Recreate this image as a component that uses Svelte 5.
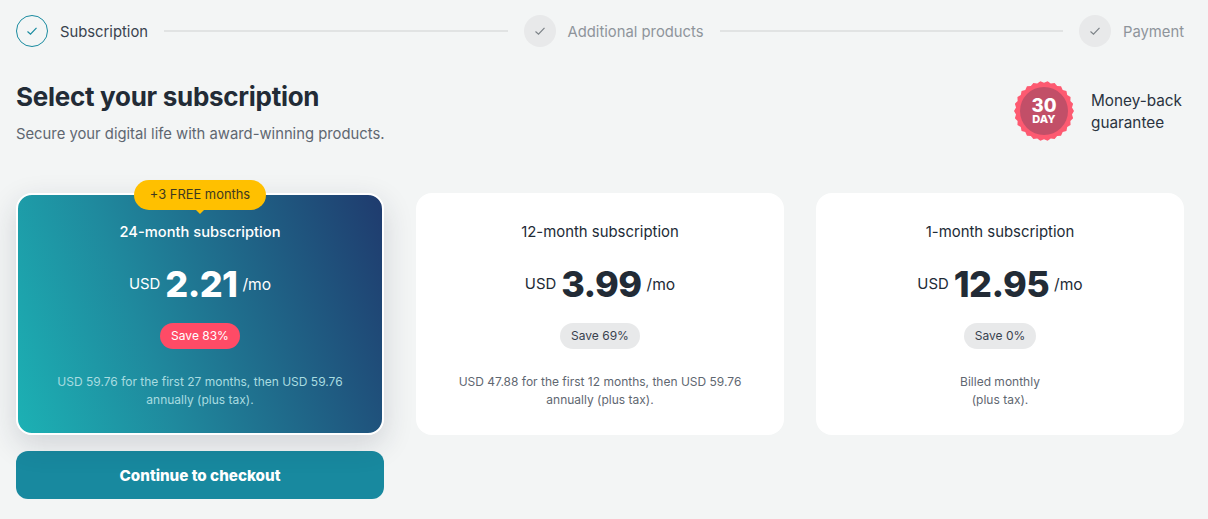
<script>
  const steps = [
    { label: 'Subscription', active: true },
    { label: 'Additional products', active: false },
    { label: 'Payment', active: false }
  ];

  const plans = [
    { name: '24-month subscription', price: '2.21', save: 'Save 83%', note: ['USD 59.76 for the first 27 months, then USD 59.76', 'annually (plus tax).'], selected: true },
    { name: '12-month subscription', price: '3.99', save: 'Save 69%', note: ['USD 47.88 for the first 12 months, then USD 59.76', 'annually (plus tax).'], selected: false },
    { name: '1-month subscription', price: '12.95', save: 'Save 0%', note: ['Billed monthly', '(plus tax).'], selected: false }
  ];

  // scalloped edge of the badge
  const teeth = 26;
  let scallop = '';
  for (let i = 0; i < teeth * 2; i++) {
    const a = (i / (teeth * 2)) * Math.PI * 2;
    const r = i % 2 ? 28.2 : 30;
    scallop += `${(30 + r * Math.cos(a)).toFixed(2)},${(30 + r * Math.sin(a)).toFixed(2)} `;
  }
</script>

<div class="page">
  <nav class="stepper">
    {#each steps as step, i}
      {#if i > 0}<div class="line"></div>{/if}
      <div class="step" class:active={step.active}>
        <span class="dot">
          <svg width="12" height="12" viewBox="0 0 12 12" fill="none"><path d="M1.5 6.5 4.5 9.2 10.5 2.8" stroke="currentColor" stroke-width="1.2"/></svg>
        </span>
        <span class="label">{step.label}</span>
      </div>
    {/each}
  </nav>

  <header class="head">
    <div>
      <h1>Select your subscription</h1>
      <p>Secure your digital life with award-winning products.</p>
    </div>
    <div class="guarantee">
      <div class="badge">
        <svg width="60" height="60" viewBox="0 0 60 60">
          <polygon points={scallop} fill="#fd5a71"/>
          <circle cx="30" cy="30" r="24" fill="#c24f68"/>
        </svg>
        <div class="badge-text"><b>30</b><span>DAY</span></div>
      </div>
      <div class="guarantee-text">Money-back<br />guarantee</div>
    </div>
  </header>

  <section class="plans">
    {#each plans as plan}
      <div class="col">
        <div class="card" class:selected={plan.selected}>
          {#if plan.selected}<div class="ribbon">+3 FREE months</div>{/if}
          <div class="name">{plan.name}</div>
          <div class="price">
            <span class="cur">USD</span>
            <span class="amount">{plan.price}</span>
            <span class="per">/mo</span>
          </div>
          <div class="save">{plan.save}</div>
          <div class="note">{plan.note[0]}<br />{plan.note[1]}</div>
        </div>
        {#if plan.selected}<button class="cta">Continue to checkout</button>{/if}
      </div>
    {/each}
  </section>
</div>

<style>
  :global(body) {
    margin: 0;
    background: #f3f5f5;
    color: #222b36;
    font-family: Inter, "Liberation Sans", sans-serif;
  }

  .page { padding: 15px 24px 20px 16px; height: 519px; box-sizing: border-box; overflow: hidden; }

  .stepper { display: flex; align-items: center; gap: 16px; height: 32px; }
  .line { flex: 1; height: 2px; background: #e1e3e3; }
  .step { display: flex; align-items: center; gap: 12px; color: #8e949b; font-size: 14.8px; }
  .step.active { color: #38424e; }
  .label { padding-top: 2px; }
  .dot {
    width: 32px; height: 32px; border-radius: 50%; background: #e8e9ea; color: #7d8388;
    display: flex; align-items: center; justify-content: center; box-sizing: border-box;
  }
  .active .dot { background: none; border: 1px solid #198ba0; color: #198ba0; }

  .head { display: flex; justify-content: space-between; margin-top: 20px; height: 126px; }
  h1 { margin: 14px 0 0; font-size: 26px; line-height: 32px; font-weight: 700; letter-spacing: -0.28px; }
  .head p { margin: 11px 0 0; font-size: 14.8px; line-height: 20px; color: #5f6771; }

  .guarantee { display: flex; align-items: flex-start; gap: 17px; margin-top: 14px; width: 170px; }
  .badge { position: relative; width: 60px; height: 60px; }
  .badge-text {
    position: absolute; inset: 0; padding-top: 17px; display: flex; flex-direction: column; align-items: center;
    color: #fff; font-weight: 800;
  }
  .badge-text b { font-size: 18.5px; line-height: 15px; font-weight: 800; }
  .badge-text span { font-size: 11px; line-height: 12px; }
  .guarantee-text { font-size: 15.3px; line-height: 22px; margin-top: 9px; color: #2a3340; white-space: nowrap; }

  .plans { display: grid; grid-template-columns: repeat(3, 368px); gap: 32px; }
  .card {
    position: relative; height: 242px; box-sizing: border-box; background: #fff; border-radius: 16px;
    padding-top: 29px; text-align: center;
  }
  .card.selected {
    color: #fff; border: 2px solid #fff; padding-top: 27px;
    background: linear-gradient(70deg, #1cb1b4 0%, #1f8a9e 35%, #1f3b6e 100%);
    box-shadow: 0 10px 30px rgba(30, 40, 60, 0.16);
  }
  .ribbon {
    position: absolute; top: -15px; left: 50%; transform: translateX(-50%); width: 132px; height: 30px;
    background: #ffc000; border-radius: 15px; color: #3e3a20; font-size: 12.9px; line-height: 30px;
  }
  .ribbon::after {
    content: ''; position: absolute; left: 61px; bottom: -4px; border: 5px solid transparent;
    border-top-color: #ffc000; border-bottom: 0;
  }
  .name { font-size: 14.9px; line-height: 20px; font-weight: 400; }
  .selected .name { font-size: 14.7px; font-weight: 500; }
  .price { display: flex; justify-content: center; align-items: center; gap: 5px; margin-top: 20px; height: 44px; }
  .cur { font-size: 14.9px; }
  .per { font-size: 15.6px; }
  .amount { font-size: 36px; font-weight: 800; letter-spacing: -0.6px; }
  .save {
    display: inline-block; margin-top: 17px; padding: 0 11px; height: 26px; line-height: 26px; border-radius: 13px;
    background: #e8e9ea; color: #38424e; font-size: 12px;
  }
  .selected .save { background: #ff4b66; color: #fff; }
  .note { margin-top: 24px; font-size: 12px; line-height: 18px; color: #5f6771; }
  .selected .note { color: #a9dce0; }

  .cta {
    display: block; width: 100%; height: 48px; margin-top: 16px; border: 0; border-radius: 12px; background: #18899f;
    color: #fff; font: 800 15.2px Inter, "Liberation Sans", sans-serif;
  }
</style>
